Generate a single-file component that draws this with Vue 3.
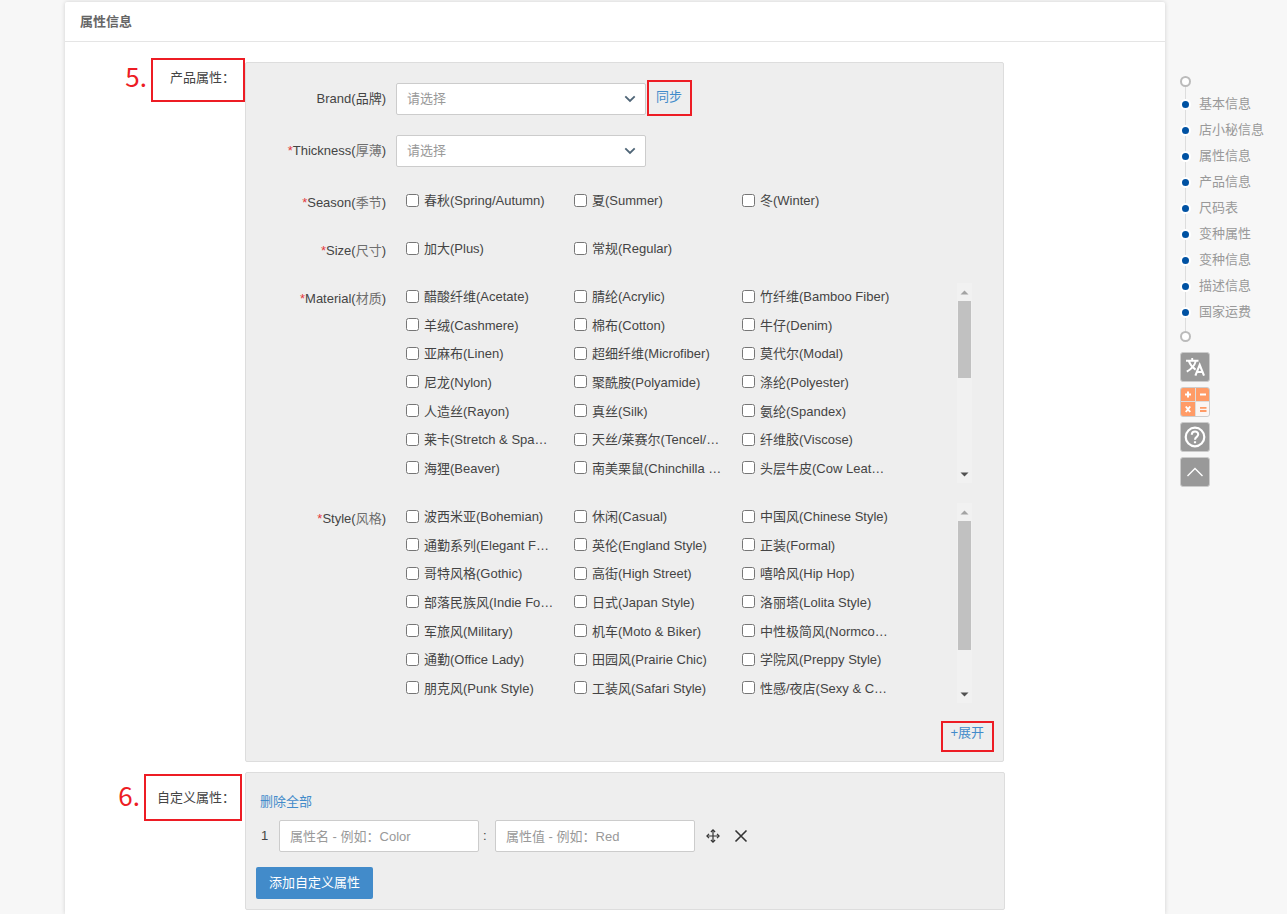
<script setup>
import { ref } from 'vue'

const selects = [
  { id: 'brand', name: 'Brand', cn: '品牌', required: false, sync: true },
  { id: 'thickness', name: 'Thickness', cn: '厚薄', required: true, sync: false },
]

const groups = [
  {
    name: 'Season', cn: '季节',
    options: ['春秋(Spring/Autumn)', '夏(Summer)', '冬(Winter)'],
  },
  {
    name: 'Size', cn: '尺寸',
    options: ['加大(Plus)', '常规(Regular)'],
  },
  {
    name: 'Material', cn: '材质', scroll: 'short',
    options: [
      '醋酸纤维(Acetate)', '腈纶(Acrylic)', '竹纤维(Bamboo Fiber)',
      '羊绒(Cashmere)', '棉布(Cotton)', '牛仔(Denim)',
      '亚麻布(Linen)', '超细纤维(Microfiber)', '莫代尔(Modal)',
      '尼龙(Nylon)', '聚酰胺(Polyamide)', '涤纶(Polyester)',
      '人造丝(Rayon)', '真丝(Silk)', '氨纶(Spandex)',
      '莱卡(Stretch & Spa…', '天丝/莱赛尔(Tencel/…', '纤维胶(Viscose)',
      '海狸(Beaver)', '南美栗鼠(Chinchilla …', '头层牛皮(Cow Leat…',
    ],
  },
  {
    name: 'Style', cn: '风格', scroll: 'long',
    options: [
      '波西米亚(Bohemian)', '休闲(Casual)', '中国风(Chinese Style)',
      '通勤系列(Elegant F…', '英伦(England Style)', '正装(Formal)',
      '哥特风格(Gothic)', '高街(High Street)', '嘻哈风(Hip Hop)',
      '部落民族风(Indie Fo…', '日式(Japan Style)', '洛丽塔(Lolita Style)',
      '军旅风(Military)', '机车(Moto & Biker)', '中性极简风(Normco…',
      '通勤(Office Lady)', '田园风(Prairie Chic)', '学院风(Preppy Style)',
      '朋克风(Punk Style)', '工装风(Safari Style)', '性感/夜店(Sexy & C…',
    ],
  },
]

const checked = ref([])
const anchors = ['基本信息', '店小秘信息', '属性信息', '产品信息', '尺码表', '变种属性', '变种信息', '描述信息', '国家运费']
</script>

<template>
  <div class="page">
    <main class="card">
      <h2 class="card-title">属性信息</h2>

      <section class="section product">
        <div class="side-label">
          <span class="step">5.</span>
          <span class="marked">产品属性：</span>
        </div>
        <div class="panel attributes">
          <div v-for="s in selects" :key="s.id" class="row">
            <label class="name" :for="s.id"><i v-if="s.required">*</i>{{ s.name }}(<span :class="{ soft: s.required }">{{ s.cn }}</span>)</label>
            <div class="control">
              <div class="select-wrap">
                <select :id="s.id"><option>请选择</option></select>
                <svg class="chevron" viewBox="0 0 12 8" width="12" height="8"><path d="M1.3 1.3 L6 6 L10.7 1.3" fill="none" stroke="#4f6577" stroke-width="1.8" /></svg>
              </div>
              <a v-if="s.sync" class="sync" href="#">同步</a>
            </div>
          </div>

          <div v-for="g in groups" :key="g.name" class="row" role="group" :aria-labelledby="'g-' + g.name">
            <span :id="'g-' + g.name" class="name"><i>*</i>{{ g.name }}(<span class="soft">{{ g.cn }}</span>)</span>
            <div class="choices" :class="{ tall: g.scroll }">
              <div class="options">
                <label v-for="o in g.options" :key="o" class="option">
                  <input v-model="checked" type="checkbox" :value="o" />
                  <span>{{ o }}</span>
                </label>
              </div>
              <div v-if="g.scroll" class="track" aria-hidden="true">
                <svg viewBox="0 0 9 5" width="9" height="5"><path d="M0.5 4.5 L4.5 0.5 L8.5 4.5Z" fill="#a3a3a3" /></svg>
                <div class="rail"><div class="thumb" :class="g.scroll"></div></div>
                <svg viewBox="0 0 9 5" width="9" height="5"><path d="M0.5 0.5 L4.5 4.5 L8.5 0.5Z" fill="#505050" /></svg>
              </div>
            </div>
          </div>

          <a class="expand" href="#">+展开</a>
        </div>
      </section>

      <section class="section custom">
        <div class="side-label">
          <span class="step">6.</span>
          <span class="marked">自定义属性：</span>
        </div>
        <div class="panel custom-panel">
          <a class="remove-all" href="#">删除全部</a>
          <div class="pair">
            <span class="index">1</span>
            <input type="text" aria-label="属性名" placeholder="属性名 - 例如：Color" />
            <span class="colon">:</span>
            <input type="text" aria-label="属性值" placeholder="属性值 - 例如：Red" />
            <button class="icon-btn" type="button" aria-label="移动">
              <svg viewBox="0 0 14 14" width="14" height="14" fill="none" stroke="#333" stroke-width="1.2">
                <path d="M7 1.5V12.5M1.5 7H12.5" />
                <path d="M4.9 3 L7 0.9 L9.1 3 M4.9 11 L7 13.1 L9.1 11 M3 4.9 L0.9 7 L3 9.1 M11 4.9 L13.1 7 L11 9.1" />
              </svg>
            </button>
            <button class="icon-btn" type="button" aria-label="删除">
              <svg viewBox="0 0 14 14" width="14" height="14"><path d="M1.5 1.5 L12.5 12.5 M12.5 1.5 L1.5 12.5" fill="none" stroke="#333" stroke-width="1.6" /></svg>
            </button>
          </div>
          <button class="add" type="button">添加自定义属性</button>
        </div>
      </section>
    </main>

    <aside class="aside">
      <nav class="anchors">
        <span class="end"></span>
        <a v-for="a in anchors" :key="a" href="#"><span class="dot"></span>{{ a }}</a>
        <span class="end"></span>
      </nav>
      <div class="tools">
        <button type="button" aria-label="翻译">
          <svg viewBox="1 1 28 28" width="28" height="28">
            <g fill="none" stroke="#fff" stroke-width="1.9">
              <path d="M6 8.8H18.5M12.2 6V8.8M15.8 9C14.6 13.6 11.5 17 6.8 19.6M8.8 9.2C10.2 13 12.6 15.6 15.6 17.6" />
              <path d="M15.4 23.6L19.7 12.8L24 23.6M17 20H22.4" stroke-width="2.1" />
            </g>
          </svg>
        </button>
        <button class="calc" type="button" aria-label="计算">
          <svg viewBox="1 1 28 28" width="28" height="28">
            <path d="M0 0H15V14H0Z M16 0H30V14H16Z M0 15H15V30H0Z" fill="#ff9b66" />
            <path d="M16 15H30V30H16Z" fill="#fbf5f2" />
            <path d="M5 7.5H11M8 4.5V10.5M20 7.5H26M5.8 19.5L10.2 25M10.2 19.5L5.8 25" fill="none" stroke="#fff" stroke-width="2" />
            <path d="M20 20.8H26.5M20 24H26.5" fill="none" stroke="#ff9b66" stroke-width="1.8" />
          </svg>
        </button>
        <button type="button" aria-label="帮助">
          <svg viewBox="1 1 28 28" width="28" height="28" fill="none" stroke="#fff">
            <circle cx="15" cy="15" r="9.3" stroke-width="2.2" />
            <path d="M11.8 12.8C11.8 8.3 18.3 8.5 18.2 12.5C18.1 14.8 15 15 15 17.8" stroke-width="2.1" />
            <path d="M15 19.2V21.3" stroke-width="2.2" />
          </svg>
        </button>
        <button type="button" aria-label="回到顶部">
          <svg viewBox="1 1 28 28" width="28" height="28"><path d="M7.5 19 L15 11.5 L22.5 19" fill="none" stroke="#fff" stroke-width="1.4" /></svg>
        </button>
      </div>
    </aside>
  </div>
</template>

<style>
body {
  background: #f7f7f7;
}
</style>

<style scoped>
.page {
  box-sizing: border-box;
  display: flex;
  min-height: 100vh;
  padding: 2px 0 0 65px;
  font: 13px/18px "Liberation Sans", "Noto Sans CJK SC", sans-serif;
  color: #444;
}
.page * {
  box-sizing: border-box;
}
a {
  color: #428bca;
  text-decoration: none;
}
button,
input,
select {
  font: inherit;
}
.card {
  flex: 1;
  min-width: 0;
  padding-bottom: 4px;
  background: #fff;
  border-radius: 2px 2px 0 0;
  box-shadow: 0 0 4px rgba(0, 0, 0, 0.16);
}
.card-title {
  margin: 0;
  padding: 0 15px;
  border-bottom: 1px solid #e5e5e5;
  font-size: 13px;
  line-height: 39px;
  color: #666;
}
.section {
  display: grid;
  grid-template-columns: 180px minmax(0, 1fr);
  align-items: start;
  padding-right: 160px;
}
.product {
  margin-top: 16px;
}
.custom {
  margin-top: 10px;
}
.side-label {
  display: flex;
  justify-content: flex-end;
  gap: 4px;
}
.step {
  font: 26px/36px "Noto Sans CJK SC", sans-serif;
  color: #ed1c24;
}
.marked {
  border: 2px solid #ed1c24;
  white-space: nowrap;
}
.product .marked {
  padding: 0 8px 4px 17px;
  line-height: 36px;
}
.custom .side-label {
  padding: 2px 3px 0 0;
}
.custom .step {
  line-height: 42px;
}
.custom .marked {
  padding: 0 5px 0 11px;
  line-height: 43px;
}
.panel {
  background: #eee;
  border: 1px solid #ddd;
  border-radius: 2px;
}
.attributes {
  display: flex;
  flex-direction: column;
  gap: 20px;
  margin: 4px 1px 0 0;
  padding: 20px 31px 9px 0;
}
.row {
  display: grid;
  grid-template-columns: 140px minmax(0, 1fr);
  column-gap: 10px;
  align-items: start;
}
.name {
  height: 28px;
  line-height: 32px;
  text-align: right;
}
.name i {
  font-style: normal;
  color: #e4393c;
}
.soft {
  color: #6e6e6e;
}
.control {
  display: flex;
  align-items: flex-start;
  height: 32px;
}
.select-wrap {
  position: relative;
  width: 250px;
}
select {
  display: block;
  width: 100%;
  height: 32px;
  padding: 0 30px 0 10px;
  appearance: none;
  background: #fff;
  border: 1px solid #ccc;
  border-radius: 2px;
  color: #999;
}
.chevron {
  position: absolute;
  top: 12px;
  right: 10px;
  pointer-events: none;
}
.sync,
.expand {
  border: 2px solid #ed1c24;
}
.sync {
  height: 36px;
  margin: -3px 0 0 1px;
  padding: 6px 8px 0 7px;
}
.expand {
  align-self: flex-end;
  height: 31px;
  margin: -2px -22px 0 0;
  padding: 1px 8px 0 7px;
}
.choices {
  display: flex;
  justify-content: space-between;
  min-height: 28px;
}
.choices.tall {
  height: 200px;
}
.options {
  display: grid;
  grid-template-columns: repeat(3, 168px);
  grid-auto-rows: 1fr;
  padding-left: 10px;
}
.option {
  display: flex;
  align-items: center;
  gap: 5px;
  padding-bottom: 2px;
  white-space: nowrap;
}
.option span {
  padding-top: 2px;
}
.option input {
  flex: none;
  width: 13px;
  height: 13px;
  margin: 0;
}
.track {
  display: flex;
  flex-direction: column;
  align-items: center;
  gap: 6px;
  width: 15px;
  padding: 7px 0 6px;
  background: #f1f1f1;
}
.track svg {
  flex: none;
}
.rail {
  flex: 1;
  width: 13px;
}
.thumb {
  background: #c1c1c1;
}
.thumb.short {
  height: 77px;
}
.thumb.long {
  height: 129px;
}
.custom-panel {
  padding: 20px 10px 10px;
}
.remove-all {
  display: block;
  width: fit-content;
  margin: 0 0 9px 4px;
}
.pair {
  display: flex;
  align-items: center;
  margin-bottom: 15px;
}
.index {
  width: 23px;
  padding-left: 5px;
}
.pair input {
  width: 200px;
  height: 32px;
  padding: 0 10px;
  background: #fff;
  border: 1px solid #ccc;
  border-radius: 2px;
  color: #444;
}
.pair input::placeholder {
  color: #999;
  opacity: 1;
}
.colon {
  width: 16px;
  padding-left: 4px;
}
.icon-btn {
  display: flex;
  margin-left: 11px;
  padding: 0;
  background: none;
  border: 0;
}
.icon-btn + .icon-btn {
  margin-left: 14px;
}
.add {
  display: block;
  height: 32px;
  padding: 0 13px;
  background: #428bca;
  border: 0;
  border-radius: 2px;
  color: #fff;
}
.aside {
  flex: none;
  width: 122px;
  padding: 74px 0 0 15px;
}
.anchors {
  display: flex;
  flex-direction: column;
  background: linear-gradient(#ddd, #ddd) 5px 0 / 1px 100% no-repeat;
}
.anchors .end {
  width: 11px;
  height: 11px;
  border: 2px solid #bbb;
  border-radius: 50%;
  background: #fff;
}
.anchors .end:first-child {
  margin-bottom: 4px;
}
.anchors .end:last-child {
  margin-top: 6px;
}
.anchors a {
  display: flex;
  align-items: center;
  gap: 8px;
  line-height: 26px;
  color: #999;
}
.dot {
  width: 11px;
  height: 11px;
  border: 2px solid #fff;
  border-radius: 50%;
  background: #0052a3;
}
.tools {
  display: flex;
  flex-direction: column;
  gap: 5px;
  margin-top: 10px;
}
.tools button {
  display: flex;
  width: 30px;
  height: 30px;
  padding: 0;
  overflow: hidden;
  background: #999;
  border: 1px solid #ccc;
  border-radius: 3px;
}
.tools .calc {
  background: #ddd;
}
</style>
